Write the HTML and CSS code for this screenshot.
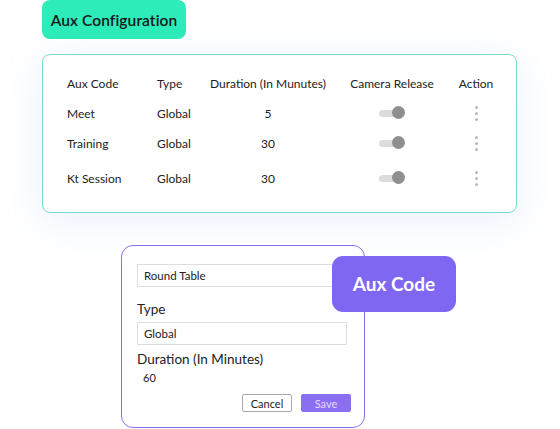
FILE: index.html
```html
<!DOCTYPE html>
<html>
<head>
<meta charset="utf-8">
<link rel="stylesheet" href="styles.css">
</head>
<body>
<div class="page">
  <div class="title-badge">Aux Configuration</div>
  <div class="card">
    <div class="row head">
      <div class="c1">Aux Code</div>
      <div class="c2">Type</div>
      <div class="c3">Duration (In Munutes)</div>
      <div class="c4">Camera Release</div>
      <div class="c5">Action</div>
    </div>
    <div class="row">
      <div class="c1">Meet</div>
      <div class="c2">Global</div>
      <div class="c3">5</div>
      <div class="c4"><span class="toggle"><span class="knob"></span></span></div>
      <div class="c5"><span class="dots"><i></i><i></i><i></i></span></div>
    </div>
    <div class="row">
      <div class="c1">Training</div>
      <div class="c2">Global</div>
      <div class="c3">30</div>
      <div class="c4"><span class="toggle"><span class="knob"></span></span></div>
      <div class="c5"><span class="dots"><i></i><i></i><i></i></span></div>
    </div>
    <div class="row last">
      <div class="c1">Kt Session</div>
      <div class="c2">Global</div>
      <div class="c3">30</div>
      <div class="c4"><span class="toggle"><span class="knob"></span></span></div>
      <div class="c5"><span class="dots"><i></i><i></i><i></i></span></div>
    </div>
  </div>
  <div class="modal">
    <div class="input">Round Table</div>
    <div class="label first">Type</div>
    <div class="input">Global</div>
    <div class="label">Duration (In Minutes)</div>
    <div class="value">60</div>
    <div class="actions">
      <button class="btn cancel">Cancel</button>
      <button class="btn save">Save</button>
    </div>
    <div class="code-badge">Aux Code</div>
  </div>
</div>
</body>
</html>
```
FILE: styles.css
```css
* { box-sizing: border-box; }
html, body { margin: 0; padding: 0; background: #fff; }
body {
  font-family: "Lato", "Open Sans", sans-serif;
  color: #1f1f24;
  width: 560px;
  height: 429px;
  overflow: hidden;
}
.page { padding-left: 42px; padding-top: 0; }
.title-badge {
  width: 144px;
  height: 39px;
  background: #2decb9;
  border-radius: 8px;
  display: flex;
  align-items: center;
  justify-content: center;
  font-size: 15.5px;
  font-weight: 600;
  color: #15171a;
  letter-spacing: 0.1px;
}
.card {
  margin-top: 15px;
  width: 475px;
  height: 159px;
  border: 1px solid #74dcd0;
  border-radius: 8px;
  padding: 13px 0 19px 24px;
  background: #fff;
  box-shadow: 0 8px 40px rgba(120, 160, 240, 0.16);
}
.row {
  display: grid;
  grid-template-columns: 90px 56px 110px 138px 30px;
  height: 30px;
  align-items: center;
  font-size: 12px;
  color: #222;
}
.row.last { margin-top: 5px; }
.c3, .c4, .c5 { text-align: center; display: flex; justify-content: center; align-items: center; white-space: nowrap; }
.toggle {
  position: relative;
  width: 26px;
  height: 14px;
  display: block;
}
.toggle::before {
  content: "";
  position: absolute;
  left: 0;
  top: 4px;
  width: 20px;
  height: 7px;
  border-radius: 4px;
  background: #dcdcdc;
}
.knob {
  position: absolute;
  right: 0;
  top: 0;
  width: 13px;
  height: 13px;
  border-radius: 50%;
  background: #8f8f8f;
}
.dots { display: flex; flex-direction: column; gap: 3px; }
.dots i { width: 3px; height: 3px; border-radius: 50%; background: #b9b9b9; display: block; }
.modal {
  position: relative;
  margin-top: 32px;
  margin-left: 79px;
  width: 244px;
  height: 183px;
  border: 1.5px solid #8a6ef0;
  border-radius: 12px;
  padding: 18px 13px 14px 15px;
  background: #fff;
}
.input {
  width: 210px;
  height: 23px;
  border: 1px solid #dedede;
  font-size: 11.5px;
  padding-left: 6px;
  display: flex;
  align-items: center;
  color: #222;
}
.label {
  font-size: 13.5px;
  line-height: 16px;
  margin-top: 6px;
  margin-bottom: 5px;
  color: #222;
}
.label.first { margin-top: 14px; }
.value {
  font-size: 11px;
  line-height: 12px;
  padding-left: 6px;
  color: #222;
}
.actions {
  display: flex;
  justify-content: flex-end;
  gap: 9px;
  margin-top: 10px;
}
.btn {
  width: 50px;
  height: 18px;
  font-family: inherit;
  font-size: 11px;
  padding: 0;
  border-radius: 2px;
  cursor: pointer;
}
.cancel { background: #fff; border: 1px solid #a9a9a9; color: #222; }
.save { background: #8b6ff2; border: 1px solid #8b6ff2; color: #e4dcff; }
.code-badge {
  position: absolute;
  left: 210px;
  top: 9.5px;
  width: 124px;
  height: 56px;
  border-radius: 11px;
  background: #8067f2;
  color: #fff;
  font-size: 19px;
  font-weight: 700;
  display: flex;
  align-items: center;
  justify-content: center;
}
```
